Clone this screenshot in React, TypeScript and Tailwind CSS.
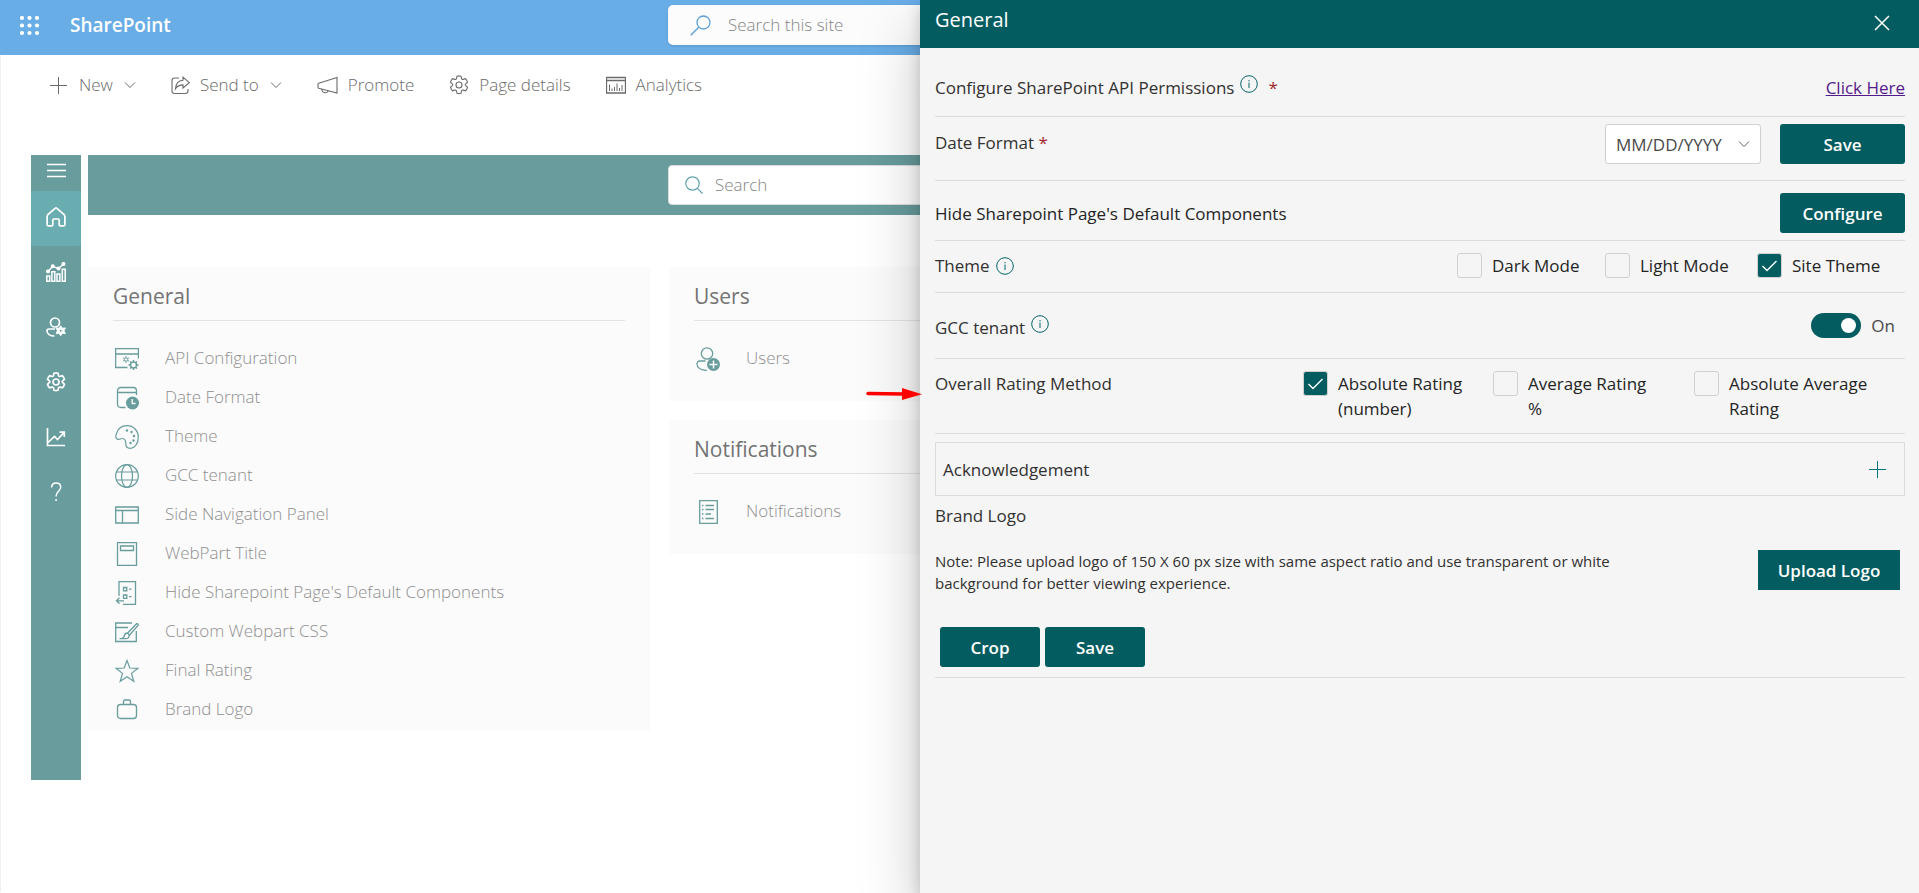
import React, { useState } from "react";
import type { ReactNode } from "react";

type IconProps = { className?: string; box?: string; stroke?: number; children?: ReactNode };

function Svg({ className = "size-6", box = "0 0 24 24", stroke = 1, children }: IconProps) {
  return (
    <svg
      aria-hidden="true"
      className={`shrink-0 ${className}`}
      viewBox={box}
      fill="none"
      stroke="currentColor"
      strokeWidth={stroke}
    >
      {children}
    </svg>
  );
}

const GEAR =
  "M8 1.200c1.300-.4 2.700-.4 4 0l.5 2.300c.2.700 1 1.100 1.700.9l2.300-.7c.9 1 1.600 2.200 2 3.500l-1.800 1.600c-.5.5-.5 1.400 0 1.900l1.800 1.600c-.4 1.300-1.100 2.500-2 3.500l-2.300-.7c-.7-.2-1.500.200-1.700.9l-.5 2.300c-1.300.4-2.700.4-4 0l-.5-2.300c-.2-.7-1-1.100-1.700-.9l-2.300.7c-.9-1-1.600-2.200-2-3.500l1.800-1.600c.5-.5.5-1.400 0-1.900L1.500 7.200c.4-1.300 1.100-2.500 2-3.500l2.300.7c.7.2 1.500-.2 1.700-.9z";

function SettingsGear({ className, stroke = 1 }: { className?: string; stroke?: number }) {
  return (
    <Svg className={className} box="0 0 20 20" stroke={stroke}>
      <path d={GEAR} />
      <circle cx="10" cy="10" r="3" />
    </Svg>
  );
}

function Chevron({ className = "h-2 w-3" }: { className?: string }) {
  return (
    <Svg className={className} box="0 0 12 8">
      <path d="m1 1.500 5 5 5-5" />
    </Svg>
  );
}

function Info() {
  return (
    <Svg className="size-[18px] text-[#03646a]" box="0 0 18 18">
      <circle cx="9" cy="9" r="8.300" />
      <path d="M9 7.500v5.500M9 5v1.300" />
    </Svg>
  );
}

const commands = [
  {
    label: "New",
    menu: true,
    icon: (
      <Svg className="mr-3 size-[17px]" box="0 0 17 17">
        <path d="M8.500 0v17M0 8.500h17" />
      </Svg>
    ),
  },
  {
    label: "Send to",
    menu: true,
    icon: (
      <Svg className="mr-2.5 size-[19px]" box="0 0 19 19" stroke={1.100}>
        <path d="M8 2H3.500Q1 2 1 4.500v10.500Q1 17.500 3.500 17.500h11q2.500 0 2.500-2.500v-2" />
        <path d="M12 1.200 18.300 6.700 12 12V8.900C8.500 8.900 6.300 10 4.500 12.800 4.800 8 7.300 4.600 12 4.300z" />
      </Svg>
    ),
  },
  {
    label: "Promote",
    icon: (
      <Svg className="mr-2.5 size-[21px]" box="0 0 21 21" stroke={1.100}>
        <path d="M20 2.500v15.500L1.700 13.200Q1 13 1 12.200V9.300q0-.8.7-1z" />
        <path d="M4.800 14v.8a3.500 3.500 0 0 0 6.500 1.200" />
      </Svg>
    ),
  },
  { label: "Page details", icon: <SettingsGear className="mr-2.5 size-5" stroke={1.100} /> },
  {
    label: "Analytics",
    icon: (
      <Svg className="mr-2.5 size-5" box="0 0 20 20">
        <path d="M.5 2.500h19v15.500H.5zM.5 5.500h19" strokeWidth="1.300" />
        <path d="M3.500 16V9.500M6 16v-2.500M8.500 16v-4M11 16V8.500M13.500 16v-3M16 16v-6" />
      </Svg>
    ),
  },
];

const navItems = [
  {
    label: "Home",
    icon: (
      <Svg className="size-5" box="0 0 20 20" stroke={1.700}>
        <path d="M9.100 1.300 1.900 7.600q-.8.800-.8 1.800v8q0 1.500 1.500 1.500h3q1.200 0 1.200-1.200v-4.500q0-1.200 1.200-1.200h4q1.200 0 1.200 1.200v4.500q0 1.200 1.200 1.200h3q1.500 0 1.500-1.500v-8q0-1-.8-1.800L10.900 1.300q-.9-.8-1.800 0z" />
      </Svg>
    ),
  },
  {
    label: "Dashboard",
    icon: (
      <Svg className="size-5" box="0 0 20 20" stroke={1.500}>
        <path d="M.8 14h2.900v5.300H.8zM5.900 9.700h2.900v9.600H5.900zM11 12h2.900v7.300H11zM16.300 7.200h2.900v12.100h-2.900z" />
        <path d="m2 9.500 4.500-5 6 2L17.500 2" />
        <circle cx="2" cy="9.500" r="1.300" fill="currentColor" />
        <circle cx="6.800" cy="4.300" r="1.300" fill="currentColor" />
        <circle cx="12.500" cy="6.500" r="1.300" fill="currentColor" />
        <circle cx="17.500" cy="2" r="1.300" fill="currentColor" />
      </Svg>
    ),
  },
  {
    label: "User settings",
    icon: (
      <Svg className="size-5" box="0 0 20 20" stroke={1.700}>
        <circle cx="9" cy="5.500" r="4.500" />
        <path d="M9 12H3Q1 12 1 14c0 3 3 5 7.500 5" />
        <path
          d="m14.700 8.800 1.700 2.400 3-.3-1.300 2.900 1.300 2.900-3-.3-1.700 2.400-1.700-2.400-3 .3 1.300-2.900L10 10.900l3 .3z"
          fill="currentColor"
          strokeWidth=".8"
        />
        <circle cx="14.700" cy="13.800" r="1" fill="#689c9d" stroke="none" />
      </Svg>
    ),
  },
  { label: "Settings", icon: <SettingsGear className="size-5" stroke={1.700} /> },
  {
    label: "Reports",
    icon: (
      <Svg className="size-5" box="0 0 20 20" stroke={1.700}>
        <path d="M1.500 1v17.500H19" />
        <path d="m2 15.500 6.500-6 3 3L18 5.500M13.500 5.200h4.800V10" />
      </Svg>
    ),
  },
  {
    label: "Help",
    icon: (
      <Svg className="size-5" box="0 0 20 20" stroke={1.500}>
        <path d="M5.500 5.500C5.700 2.600 7.500 1 10.200 1c2.600 0 4.500 1.600 4.500 4.200 0 3.800-4.600 4.500-4.600 8.800v.5M10.100 17v2" />
      </Svg>
    ),
  },
];

const generalItems = [
  {
    label: "API Configuration",
    icon: (
      <Svg>
        <path d="M12.500 20.500H.6V1.600h22.800v9.900M.6 7h22.800" strokeWidth="1.300" />
        <circle cx="11" cy="12.500" r="1.700" />
        <path d="M11 9v1.500M11 14.500V16M8 10.800l1.500.8M12.600 13.400l1.500.8M8 14.200l1.500-.8M12.600 11.600l1.500-.8" />
        <circle cx="18.500" cy="18" r="3" strokeWidth="1.400" />
        <path
          d="M18.500 13v2M18.500 21v2M13.500 18h2M21.500 18h2M15 14.500l1.400 1.400M20.600 20.100l1.400 1.400M15 21.500l1.400-1.400M20.600 15.900l1.400-1.400"
          strokeWidth="1.300"
        />
      </Svg>
    ),
  },
  {
    label: "Date Format",
    icon: (
      <Svg>
        <path d="M10.500 21.500H6q-3.500 0-3.500-3.500V5Q2.500 1.500 6 1.500h12q3.500 0 3.500 3.500v4M2.500 6.500h19" strokeWidth="1.300" />
        <circle cx="17.500" cy="17" r="6.500" fill="currentColor" stroke="none" />
        <path d="M17.200 13v4.500h3.300" stroke="#fbfbfb" strokeWidth="1.400" />
      </Svg>
    ),
  },
  {
    label: "Theme",
    icon: (
      <Svg stroke={1.200}>
        <path d="M1 10C2.500 3.500 7 .7 12 .7c6.500 0 11.300 5 11.300 11.300 0 6.300-3.300 11.300-8 11.300-3.300 0-4.500-1.700-4.500-4.300 0-3.200-.8-5.500-3.800-5.500-1.300 0-2 .9-3.200.9C1.500 14.400.3 12.500 1 10z" />
        <g fill="currentColor" stroke="none">
          <circle cx="12" cy="5.500" r="1.200" />
          <circle cx="16.500" cy="7" r="1.200" />
          <circle cx="19" cy="11" r="1.200" />
          <circle cx="18.500" cy="15.500" r="1.200" />
          <circle cx="15.500" cy="18" r="1.200" />
        </g>
      </Svg>
    ),
  },
  {
    label: "GCC tenant",
    icon: (
      <Svg stroke={1.200}>
        <circle cx="12" cy="12" r="11.300" />
        <ellipse cx="12" cy="12" rx="5.500" ry="11.300" />
        <path d="M1.500 8h21M1.500 16h21" />
      </Svg>
    ),
  },
  {
    label: "Side Navigation Panel",
    icon: (
      <Svg stroke={1.300}>
        <path d="M.7 4h22.600v16H.7zM.7 7.500h22.600M7.500 7.500V20" />
      </Svg>
    ),
  },
  {
    label: "WebPart Title",
    icon: (
      <Svg stroke={1.300}>
        <path d="M2.500.7h19v22.600h-19zM5.500 4h13v4.500h-13z" />
      </Svg>
    ),
  },
  {
    label: "Hide Sharepoint Page's Default Components",
    icon: (
      <Svg stroke={1.300}>
        <path d="M4 15V.7h16.500v22.600H8M8.500 6.500h3.300v3.300H8.500zM8.500 14h3.300v3.300H8.500zM14 8.200h2.500M14 15.700h2.500" />
        <path d="M9 19.800H1.500M4.500 16.800l-3 3 3 3" />
      </Svg>
    ),
  },
  {
    label: "Custom Webpart CSS",
    icon: (
      <Svg stroke={1.300}>
        <path d="M17 3H.7v18.500h20.600V11M.7 7.500H13" />
        <path d="M4.500 18.700h6.300q3.200 0 3.400-3.200l9-10.300q.3-1.700-1.600-1.500L12.700 13q-2.600 0-3.100 2-.5 2.500-2.600 3.700M12.700 13l1.500 2.500" />
      </Svg>
    ),
  },
  {
    label: "Final Rating",
    icon: (
      <Svg stroke={1.200}>
        <path d="m12 1.500 2.800 7.500 8.200.3-6.500 5.100 2.300 7.900L12 17.700l-6.800 4.600 2.300-7.900L1 9.300 9.200 9z" />
      </Svg>
    ),
  },
  {
    label: "Brand Logo",
    icon: (
      <Svg stroke={1.300}>
        <rect x="2.500" y="6.500" width="19" height="14" rx="3" />
        <path d="M8.500 6.500v-3Q8.500 2 10 2h4q1.500 0 1.500 1.500v3" />
      </Svg>
    ),
  },
];

const userItems = [
  {
    label: "Users",
    icon: (
      <Svg stroke={1.300}>
        <circle cx="11" cy="6.500" r="5.700" />
        <path d="M9.500 14H4Q1 14 1 17c0 3.500 3.500 6.300 10 6.300" />
        <circle cx="17.500" cy="17.500" r="6.500" fill="currentColor" stroke="none" />
        <path d="M17.500 13.500v8M13.500 17.500h8" stroke="#fbfbfb" strokeWidth="1.500" />
      </Svg>
    ),
  },
];

const notificationItems = [
  {
    label: "Notifications",
    icon: (
      <Svg stroke={1.300}>
        <path d="M3.700.7h17.600v22.600H3.700z" />
        <path d="M9.500 5.500H18M9.500 9.500H18M9.500 14H15M9.500 18.500H18M6 5.500h1.500M6 9.500h1.500M6 14h1.500M6 18.500h1.500" />
      </Svg>
    ),
  },
];

type Item = { label: string; icon: ReactNode };

function Card({ title, items, className = "" }: { title: string; items: Item[]; className?: string }) {
  return (
    <section className={`bg-[#fbfbfb] px-[25px] pt-[15px] ${className}`}>
      <h2 className="border-b border-[#e3e3e3] pb-2.5 text-[21px] leading-7 text-[#737373]">{title}</h2>
      <ul className="pt-[17px]">
        {items.map((item) => (
          <li key={item.label}>
            <a href="#" className="flex h-[39px] items-center gap-[26px] pl-0.5 text-[17px] font-light text-[#8f8f8f]">
              <span className="pt-0.5 text-[#689c9d]">{item.icon}</span>
              {item.label}
            </a>
          </li>
        ))}
      </ul>
    </section>
  );
}

function Check({ label, className = "", ...rest }: { label: string; className?: string } & React.InputHTMLAttributes<HTMLInputElement>) {
  return (
    <label className={`flex items-start gap-2.5 text-[#242424] ${className}`}>
      <span className="relative flex size-[25px] shrink-0">
        <input
          type="checkbox"
          className="peer size-full appearance-none rounded-[3px] border border-[#d2d0ce] bg-[#f5f5f5] checked:bg-[#035c5f]"
          {...rest}
        />
        <svg
          aria-hidden="true"
          viewBox="0 0 25 25"
          fill="none"
          stroke="white"
          strokeWidth="1.400"
          className="pointer-events-none absolute inset-0 hidden peer-checked:block"
        >
          <path d="m5.500 13 4.500 4.500L19.500 8" />
        </svg>
      </span>
      <span>{label}</span>
    </label>
  );
}

function PrimaryButton({ children, className = "w-[125px] rounded-[3px]" }: { children: ReactNode; className?: string }) {
  return (
    <button type="button" className={`h-10 bg-[#035c5f] text-[17px] font-semibold text-white ${className}`}>
      {children}
    </button>
  );
}

function SettingsPanel() {
  const [theme, setTheme] = useState("Site Theme");
  const [rating, setRating] = useState("Absolute Rating (number)");
  const [gcc, setGcc] = useState(true);
  const themes = [
    { label: "Dark Mode", width: "w-[148px]" },
    { label: "Light Mode", width: "w-[152px]" },
    { label: "Site Theme", width: "w-[148px]" },
  ];
  const ratings = [
    { label: "Absolute Rating (number)", width: "w-[190px] pr-5" },
    { label: "Average Rating %", width: "w-[201px] pr-10" },
    { label: "Absolute Average Rating", width: "w-[211px] pr-5" },
  ];

  return (
    <aside className="absolute inset-y-0 right-0 w-[999px] max-w-full bg-[#f5f5f5] shadow-[0_26px_58px_rgba(0,0,0,0.22),0_5px_14px_rgba(0,0,0,0.18)]">
      <header className="flex h-12 items-start justify-between bg-[#035c5f] pr-[29px] pl-[15px] text-white">
        <h1 className="pt-1.5 text-xl leading-7 font-medium">General</h1>
        <button type="button" aria-label="Close" className="pt-[15px]">
          <Svg className="size-4" box="0 0 16 16" stroke={1.500}>
            <path d="m1 1 14 14M15 1 1 15" />
          </Svg>
        </button>
      </header>

      <div className="pr-3.5 pl-[15px] text-[17px] leading-[25px] font-medium text-[#323130]">
        <div className="flex items-center justify-between border-b border-[#dcdcdc] pt-[27px] pb-4">
          <div className="flex items-start gap-1.5">
            <span>Configure SharePoint API Permissions</span>
            <Info />
            <span className="pl-1 text-[#a4262c]">*</span>
          </div>
          <a href="#" className="font-normal text-[#551a8b] underline">
            Click Here
          </a>
        </div>

        <div className="flex items-center justify-between border-b border-[#dcdcdc] pt-[7px] pb-4">
          <label htmlFor="date-format" className="pb-1">
            Date Format <span className="text-[#a4262c]">*</span>
          </label>
          <div className="flex gap-[19px]">
            <div className="relative">
              <select
                id="date-format"
                className="h-10 w-[156px] appearance-none rounded-[3px] border border-[#d2d0ce] bg-white pl-2.5 font-normal text-[#4a4a4a]"
              >
                <option>MM/DD/YYYY</option>
                <option>DD/MM/YYYY</option>
                <option>YYYY/MM/DD</option>
              </select>
              <span className="pointer-events-none absolute inset-y-0 right-[11px] flex items-center text-[#605e5c]">
                <Chevron />
              </span>
            </div>
            <PrimaryButton>Save</PrimaryButton>
          </div>
        </div>

        <div className="flex items-center justify-between border-b border-[#dcdcdc] pt-3 pb-[7px] text-[#242424]">
          <span>Hide Sharepoint Page's Default Components</span>
          <PrimaryButton>Configure</PrimaryButton>
        </div>

        <div className="flex items-center justify-between border-b border-[#dcdcdc] pt-3 pb-3.5">
          <div className="flex items-center gap-1.5">
            <span>Theme</span>
            <Info />
          </div>
          <div className="flex">
            {themes.map((t) => (
              <Check
                key={t.label}
                label={t.label}
                className={t.width}
                checked={theme === t.label}
                onChange={() => setTheme(t.label)}
              />
            ))}
          </div>
        </div>

        <div className="flex items-center justify-between border-b border-[#dcdcdc] pt-[18px] pb-[18px]">
          <div className="flex items-start gap-1.5 pt-1">
            <span>GCC tenant</span>
            <Info />
          </div>
          <label className="flex items-center gap-2.5 pr-2.5 font-normal text-[#4a4a4a]">
            <input
              type="checkbox"
              role="switch"
              aria-label="GCC tenant"
              checked={gcc}
              onChange={() => setGcc(!gcc)}
              className="h-[25px] w-[50px] appearance-none rounded-full bg-[#8a8886] p-[5px] before:block before:size-[15px] before:rounded-full before:bg-white checked:bg-[#035c5f] checked:before:ml-auto"
            />
            {gcc ? "On" : "Off"}
          </label>
        </div>

        <div className="flex items-start justify-between border-b border-[#dcdcdc] py-3">
          <span>Overall Rating Method</span>
          <div className="flex">
            {ratings.map((r) => (
              <Check
                key={r.label}
                label={r.label}
                className={r.width}
                checked={rating === r.label}
                onChange={() => setRating(r.label)}
              />
            ))}
          </div>
        </div>

        <button
          type="button"
          className="mt-2 flex h-[54px] w-full items-center justify-between border border-[#dcdcdc] pr-[18px] pl-[7px] text-left"
        >
          Acknowledgement
          <Svg className="size-[17px] text-[#03787c]" box="0 0 17 17">
            <path d="M8.500 0v17M0 8.500h17" />
          </Svg>
        </button>

        <div className="border-b border-[#dcdcdc] pt-[7px] pb-2.5">
          <h2>Brand Logo</h2>
          <div className="flex items-start justify-between pt-[22px] pr-[5px]">
            <p className="max-w-[720px] text-[15px] leading-[22px] font-normal">
              Note: Please upload logo of 150 X 60 px size with same aspect ratio and use transparent or white background
              for better viewing experience.
            </p>
            <PrimaryButton className="w-[142px]">Upload Logo</PrimaryButton>
          </div>
          <div className="flex gap-[5px] pt-[33px] pl-[5px]">
            <PrimaryButton className="w-[100px] rounded-[3px]">Crop</PrimaryButton>
            <PrimaryButton className="w-[100px] rounded-[3px]">Save</PrimaryButton>
          </div>
        </div>
      </div>
    </aside>
  );
}

export default function App() {
  return (
    <div className="relative min-h-screen overflow-hidden bg-white font-['Open_Sans','Noto_Sans',sans-serif]">
      <header className="flex h-[55px] items-center bg-[#69ade7]">
        <div className="flex w-[668px] items-center gap-[30px] pb-1 pl-5 text-white">
          <button type="button" aria-label="App launcher">
            <svg aria-hidden="true" viewBox="0 0 20 20" fill="currentColor" className="size-5">
              {[2, 9.500, 17].map((y) => [2, 9.500, 17].map((x) => <circle key={`${x}-${y}`} cx={x} cy={y} r="2.100" />))}
            </svg>
          </button>
          <a href="#" className="text-[19px] font-semibold">
            SharePoint
          </a>
        </div>
        <label className="mb-[5px] flex h-10 w-[585px] items-center gap-[17px] rounded-[5px] bg-[#fcfcfc] pl-[22px] shadow-sm">
          <Svg className="size-[21px] text-[#5b9fd8]" box="0 0 21 21" stroke={1.300}>
            <circle cx="13.500" cy="7.500" r="6.500" />
            <path d="M8.700 12.300.7 20.300" />
          </Svg>
          <input
            type="search"
            aria-label="Search this site"
            placeholder="Search this site"
            className="w-full bg-transparent text-[17px] font-light outline-none placeholder:text-[#858585]"
          />
        </label>
      </header>

      <div className="border-l border-[#f0f0f0]">
        <nav className="flex h-[60px] items-center gap-[35px] pl-[49px] text-[17px] font-light text-[#6b6b6b]">
          {commands.map((c) => (
            <button key={c.label} type="button" className="flex items-center">
              {c.icon}
              {c.label}
              {c.menu && (
                <span className="pl-[11px]">
                  <Chevron />
                </span>
              )}
            </button>
          ))}
        </nav>

        <div className="flex gap-[7px] pt-10 pb-28 pl-[30px]">
          <nav className="flex h-[625px] w-[50px] shrink-0 flex-col bg-[#689c9d] text-white">
            <button type="button" aria-label="Menu" className="flex h-9 items-center justify-center pb-[5px]">
              <Svg className="size-[19px]" box="0 0 19 19" stroke={1.500}>
                <path d="M0 3.500h19M0 9.500h19M0 15.500h19" />
              </Svg>
            </button>
            {navItems.map((n, i) => (
              <a
                key={n.label}
                href="#"
                aria-label={n.label}
                className={`flex h-[55px] items-center justify-center rounded-[3px] pb-1 ${i === 0 ? "bg-[#69adb1]" : ""}`}
              >
                {n.icon}
              </a>
            ))}
          </nav>

          <main className="grow">
            <div className="flex h-[60px] items-center bg-[#689c9d] pl-[580px]">
              <label className="flex h-10 w-[582px] items-center gap-3 rounded-sm border border-[#dcdcdc] bg-white pl-4">
                <Svg className="size-[18px] text-[#5fa3ab]" box="0 0 18 18" stroke={1.200}>
                  <circle cx="7.500" cy="7.500" r="6.700" />
                  <path d="m12.300 12.300 5.200 5.200" />
                </Svg>
                <input
                  type="search"
                  aria-label="Search"
                  placeholder="Search"
                  className="w-full bg-transparent text-[17px] font-light outline-none placeholder:text-[#858585]"
                />
              </label>
            </div>
            <div className="flex items-start gap-[19px] pt-[52px]">
              <Card title="General" items={generalItems} className="w-[562px] pb-[3px]" />
              <div className="flex w-[562px] flex-col gap-[19px]">
                <Card title="Users" items={userItems} className="pb-6" />
                <Card title="Notifications" items={notificationItems} className="pb-6" />
              </div>
            </div>
          </main>
        </div>
      </div>

      <SettingsPanel />

      <svg
        aria-hidden="true"
        viewBox="0 0 56 12"
        className="absolute top-[388px] right-[997px] h-3 w-14 text-[#ff0000]"
        fill="currentColor"
      >
        <path d="M2 5.500 38 6" stroke="currentColor" strokeWidth="3.500" strokeLinecap="round" />
        <path d="M36 0 56 6.300 36 12z" />
      </svg>
    </div>
  );
}
